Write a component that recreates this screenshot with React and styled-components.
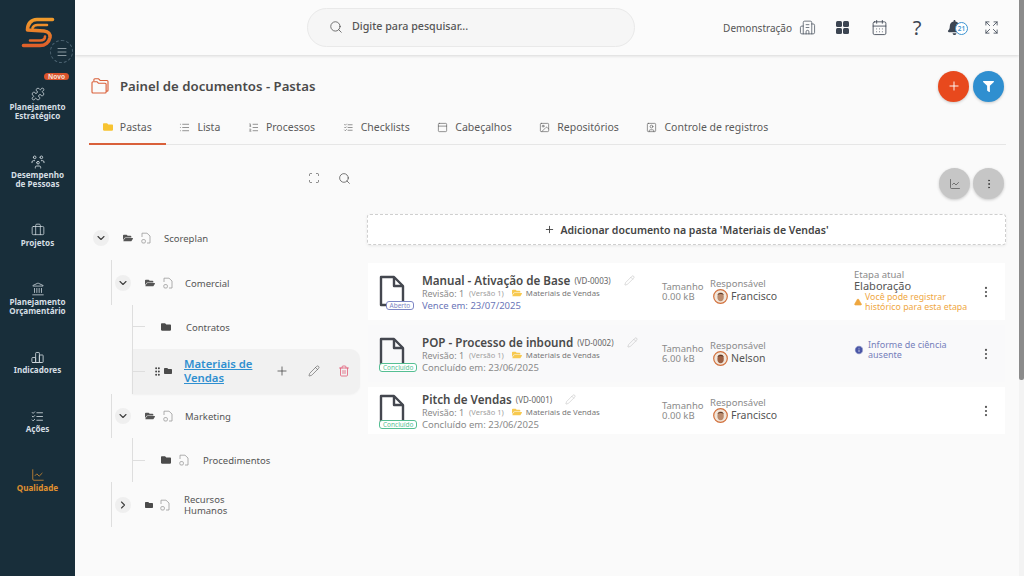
import React from "react";
import styled, { createGlobalStyle } from "styled-components";
import {
  Puzzle,
  Briefcase,
  Landmark,
  ChartLine,
  Menu,
  Search,
  Building2,
  CalendarDays,
  Expand,
  Plus,
  List,
  ListOrdered,
  PanelTop,
  Image,
  SquareUser,
  Scan,
  ChevronDown,
  ChevronRight,
  Pencil,
  Trash2,
  EllipsisVertical,
  GripVertical,
  Info,
  TriangleAlert,
} from "lucide-react";
import { FaBell, FaFolder, FaFolderOpen, FaFilter } from "react-icons/fa";
import { TbChartBar, TbUsersGroup, TbListCheck } from "react-icons/tb";

const GlobalStyle = createGlobalStyle`
  html, body { margin: 0; padding: 0; height: 100%; }
  body { font-family: "Noto Sans", "Liberation Sans", sans-serif; background: #fafafa; color: #4a4a4a; overflow: hidden; }
  * { box-sizing: border-box; }
`;

const navItems = [
  { icon: <Puzzle size={14} strokeWidth={1.3} />, label: "Planejamento Estratégico", isNew: true },
  { icon: <TbUsersGroup size={16} strokeWidth={1.3} />, label: "Desempenho de Pessoas" },
  { icon: <Briefcase size={14} strokeWidth={1.3} />, label: "Projetos" },
  { icon: <Landmark size={14} strokeWidth={1.3} />, label: "Planejamento Orçamentário" },
  { icon: <TbChartBar size={15} strokeWidth={1.3} />, label: "Indicadores" },
  { icon: <TbListCheck size={15} strokeWidth={1.3} />, label: "Ações" },
  { icon: <ChartLine size={14} strokeWidth={1.3} />, label: "Qualidade", active: true },
];

const tabs = [
  { icon: <FaFolder size={10} color="#f7c331" />, label: "Pastas", active: true },
  { icon: <List size={11} strokeWidth={1.4} />, label: "Lista" },
  { icon: <ListOrdered size={11} strokeWidth={1.4} />, label: "Processos" },
  { icon: <TbListCheck size={11} strokeWidth={1.4} />, label: "Checklists" },
  { icon: <PanelTop size={11} strokeWidth={1.4} />, label: "Cabeçalhos" },
  { icon: <Image size={11} strokeWidth={1.4} />, label: "Repositórios" },
  { icon: <SquareUser size={11} strokeWidth={1.4} />, label: "Controle de registros" },
];

const docs = [
  {
    title: "Manual - Ativação de Base",
    code: "(VD-0003)",
    status: "Aberto",
    due: "Vence em: 23/07/2025",
    size: "0.00 kB",
    owner: "Francisco",
    height: 57,
    stage: true,
  },
  {
    title: "POP - Processo de inbound",
    code: "(VD-0002)",
    status: "Concluído",
    due: "Concluído em: 23/06/2025",
    size: "6.00 kB",
    owner: "Nelson",
    height: 57,
    notice: true,
    tinted: true,
  },
  {
    title: "Pitch de Vendas",
    code: "(VD-0001)",
    status: "Concluído",
    due: "Concluído em: 23/06/2025",
    size: "0.00 kB",
    owner: "Francisco",
    height: 47,
  },
];

const Logo = () => (
  <svg width="36" height="34" viewBox="0 0 36 34" fill="none" strokeLinecap="round">
    <defs>
      <linearGradient id="lg" x1="0" y1="0" x2="0" y2="1">
        <stop offset="0" stopColor="#f09a2b" />
        <stop offset="1" stopColor="#e0602a" />
      </linearGradient>
    </defs>
    <path
      d="M31.5 3.5H16C10 3.5 6.5 8 6.5 14L23 15C27.5 15.5 29.5 18 29 21.5C28 26.5 24 29.5 19 29.5H2.5"
      stroke="url(#lg)"
      strokeWidth="3.6"
      strokeLinejoin="round"
    />
    <path d="M26 9H16.5C13.5 9 12 10.5 11.5 12" stroke="#ee8f2b" strokeWidth="2.6" />
    <path d="M9 24.5H19C22 24.5 24 23 24 20.5" stroke="#e56a2a" strokeWidth="2.6" />
  </svg>
);

const TitleFolder = () => (
  <svg width="18" height="16" viewBox="0 0 19 17" fill="none" stroke="#d9603a" strokeWidth="1.2" strokeLinejoin="round">
    <path d="M3 3.2V1.8C3 1.2 3.4 .8 4 .8H8L9.6 2.6H17C17.6 2.6 18 3 18 3.6V13C18 13.6 17.6 14 17 14H16" />
    <path d="M1 5C1 4.4 1.4 4 2 4H6.5L8 5.6H15C15.6 5.6 16 6 16 6.6V15C16 15.6 15.6 16 15 16H2C1.4 16 1 15.6 1 15V5Z" />
  </svg>
);

const FileMark = () => (
  <svg width="10" height="12" viewBox="0 0 10 12" fill="none" stroke="#9a9a9a" strokeWidth="0.8">
    <path d="M1 5V1.2H6L9 4V11H6" />
    <rect x="0.8" y="7.6" width="3.6" height="3.4" rx="1.2" />
  </svg>
);

const DocIcon = () => (
  <svg width="26" height="32" viewBox="0 0 26 32" fill="none" stroke="#44474f" strokeWidth="2.4" strokeLinejoin="round">
    <path d="M24 30H2V2H15L24 11V30Z" />
    <path d="M15 2V11H24" />
  </svg>
);

const Avatar = ({ dark }) => (
  <svg width="15" height="15" viewBox="0 0 15 15">
    <circle cx="7.5" cy="7.5" r="6.8" fill="#f1e6da" stroke="#d2703c" strokeWidth="1.2" />
    <ellipse cx="7.6" cy="7.8" rx="3.2" ry="4.4" fill={dark ? "#9c5f42" : "#b98a6c"} />
    <path d="M4.5 6C4.8 3.4 10.2 3.2 10.8 6C9 4.8 6.4 4.8 4.5 6Z" fill="#5b3a2a" />
  </svg>
);

const FolderName = ({ children }) => (
  <Crumb>
    <FaFolderOpen size={10} color="#f7c94f" />
    <CrumbText>{children}</CrumbText>
  </Crumb>
);

const DocCard = ({ doc }) => (
  <Card $height={doc.height} $tinted={doc.tinted}>
    <DocThumb>
      <DocIcon />
      <StatusBadge $done={doc.status !== "Aberto"}>{doc.status}</StatusBadge>
    </DocThumb>
    <DocInfo>
      <TitleLine>
        <DocTitle>{doc.title}</DocTitle>
        <DocCode>{doc.code}</DocCode>
        <Pencil size={11} strokeWidth={1} color="#b5b5b5" />
      </TitleLine>
      <MetaLine>
        <span>Revisão: 1</span>
        <Version>(Versão 1)</Version>
        <FolderName>Materiais de Vendas</FolderName>
      </MetaLine>
      <DueLine $open={doc.status === "Aberto"}>{doc.due}</DueLine>
    </DocInfo>
    <SizeCol>
      <SmallLabel>Tamanho</SmallLabel>
      <SmallLabel>{doc.size}</SmallLabel>
    </SizeCol>
    <OwnerCol>
      <SmallLabel>Responsável</SmallLabel>
      <OwnerRow>
        <Avatar dark={doc.owner === "Nelson"} />
        <OwnerName>{doc.owner}</OwnerName>
      </OwnerRow>
    </OwnerCol>
    <StageCol>
      {doc.stage && (
        <>
          <SmallLabel>Etapa atual</SmallLabel>
          <StageName>Elaboração</StageName>
          <Warning>
            <TriangleAlert size={8} fill="#efa73f" color="#efa73f" />
            <span>
              Você pode registrar
              <br />
              histórico para esta etapa
            </span>
          </Warning>
        </>
      )}
      {doc.notice && (
        <Notice>
          <Info size={10} fill="#4a56a6" color="#fff" strokeWidth={1.6} />
          <span>
            Informe de ciência
            <br />
            ausente
          </span>
        </Notice>
      )}
    </StageCol>
    <Kebab>
      <EllipsisVertical size={14} strokeWidth={1.8} color="#555" />
    </Kebab>
  </Card>
);

export default function App() {
  return (
    <Shell>
      <GlobalStyle />
      <Sidebar>
        <LogoBox>
          <Logo />
          <MenuToggle>
            <Menu size={12} strokeWidth={1.2} />
          </MenuToggle>
        </LogoBox>
        <Nav>
          {navItems.map((item) => (
            <NavItem key={item.label} $active={item.active}>
              {item.isNew && <NewBadge>Novo</NewBadge>}
              <NavIcon>{item.icon}</NavIcon>
              <NavLabel>{item.label}</NavLabel>
            </NavItem>
          ))}
        </Nav>
      </Sidebar>

      <Main>
        <TopBar>
          <SearchBox>
            <Search size={14} strokeWidth={1.3} />
            <SearchText>Digite para pesquisar...</SearchText>
          </SearchBox>
          <TopActions>
            <CompanyName>Demonstração</CompanyName>
            <TopIcon $w={30}>
              <Building2 size={17} strokeWidth={1} />
            </TopIcon>
            <TopIcon $w={40}>
              <Squares>
                <i />
                <i />
                <i />
                <i />
              </Squares>
            </TopIcon>
            <TopIcon $w={34}>
              <CalendarDays size={17} strokeWidth={1.2} />
            </TopIcon>
            <TopIcon $w={42}>
              <QuestionMark>?</QuestionMark>
            </TopIcon>
            <TopIcon $w={32}>
              <FaBell size={15} color="#3c4552" />
              <BellCount>21</BellCount>
            </TopIcon>
            <TopIcon $w={42}>
              <Expand size={15} strokeWidth={1.3} />
            </TopIcon>
          </TopActions>
        </TopBar>

        <Content>
          <PageHead>
            <PageTitle>
              <TitleFolder />
              <h1>Painel de documentos - Pastas</h1>
            </PageTitle>
            <RoundButtons>
              <RoundButton $bg="#e8491d">
                <Plus size={14} color="#fff" strokeWidth={1.6} />
              </RoundButton>
              <RoundButton $bg="#2f8fd0">
                <FaFilter size={11} color="#fff" />
              </RoundButton>
            </RoundButtons>
          </PageHead>

          <Tabs>
            {tabs.map((tab) => (
              <Tab key={tab.label} $active={tab.active}>
                {tab.icon}
                <span>{tab.label}</span>
              </Tab>
            ))}
          </Tabs>

          <Columns>
            <TreePanel>
              <TreeTools>
                <Scan size={12} strokeWidth={1.3} />
                <Search size={13} strokeWidth={1.3} />
              </TreeTools>

              <TreeRow>
                <Chevron>
                  <ChevronDown size={12} strokeWidth={2.2} />
                </Chevron>
                <FolderIcons $gap={8} $ml={14}>
                  <FaFolderOpen size={10} color="#555" />
                  <FileMark />
                </FolderIcons>
                <NodeLabel $ml={13}>Scoreplan</NodeLabel>
              </TreeRow>

              <TreeRow $pl={22}>
                <Guide />
                <Chevron $ml={3}>
                  <ChevronDown size={12} strokeWidth={2.2} />
                </Chevron>
                <FolderIcons $gap={8} $ml={14}>
                  <FaFolderOpen size={10} color="#555" />
                  <FileMark />
                </FolderIcons>
                <NodeLabel $ml={12}>Comercial</NodeLabel>
              </TreeRow>

              <TreeRow $pl={43}>
                <Guide />
                <Tick />
                <FolderIcons $ml={16}>
                  <FaFolder size={10} color="#4b4b4b" />
                </FolderIcons>
                <NodeLabel $ml={15}>Contratos</NodeLabel>
              </TreeRow>

              <SelectedRow>
                <Guide />
                <Tick />
                <GripVertical size={11} strokeWidth={2.2} color="#444" />
                <FaFolder size={8} color="#4b4b4b" />
                <SelectedLabel href="#">Materiais de Vendas</SelectedLabel>
                <RowActions>
                  <Plus size={14} strokeWidth={1.3} color="#444" />
                  <Pencil size={12} strokeWidth={1.2} color="#555" />
                  <Trash2 size={12} strokeWidth={1.5} color="#e0526f" />
                </RowActions>
              </SelectedRow>

              <TreeRow $pl={22}>
                <Guide />
                <Chevron $ml={3}>
                  <ChevronDown size={12} strokeWidth={2.2} />
                </Chevron>
                <FolderIcons $gap={8} $ml={14}>
                  <FaFolderOpen size={10} color="#555" />
                  <FileMark />
                </FolderIcons>
                <NodeLabel $ml={12}>Marketing</NodeLabel>
              </TreeRow>

              <TreeRow $pl={43}>
                <Guide />
                <Tick />
                <FolderIcons $gap={8} $ml={16}>
                  <FaFolder size={10} color="#4b4b4b" />
                  <FileMark />
                </FolderIcons>
                <NodeLabel $ml={14}>Procedimentos</NodeLabel>
              </TreeRow>

              <TreeRow $pl={22}>
                <Guide />
                <Chevron $ml={3}>
                  <ChevronRight size={12} strokeWidth={2.2} />
                </Chevron>
                <FolderIcons $gap={7} $ml={14}>
                  <FaFolder size={8} color="#4b4b4b" />
                  <FileMark />
                </FolderIcons>
                <NodeLabel $ml={14} $w={60}>
                  Recursos Humanos
                </NodeLabel>
              </TreeRow>
            </TreePanel>

            <DocsPanel>
              <DocsTools>
                <GreyButton>
                  <ChartLine size={12} strokeWidth={1.3} />
                </GreyButton>
                <GreyButton>
                  <EllipsisVertical size={12} strokeWidth={2} />
                </GreyButton>
              </DocsTools>
              <AddDoc>
                <Plus size={11} strokeWidth={2} />
                Adicionar documento na pasta 'Materiais de Vendas'
              </AddDoc>
              <DocList>
                {docs.map((doc) => (
                  <DocCard key={doc.code} doc={doc} />
                ))}
              </DocList>
            </DocsPanel>
          </Columns>
        </Content>
      </Main>

      <Scrollbar>
        <ScrollThumb />
      </Scrollbar>
    </Shell>
  );
}

const Shell = styled.div`
  display: flex;
  width: 100vw;
  height: 100vh;
  overflow: hidden;
`;

const Sidebar = styled.aside`
  width: 75px;
  flex: none;
  background: #182e3a;
  color: #d5dee3;
`;

const LogoBox = styled.div`
  position: relative;
  height: 77px;
  padding: 16px 0 0 21px;
`;

const MenuToggle = styled.div`
  position: absolute;
  left: 50px;
  top: 40px;
  width: 23px;
  height: 23px;
  border-radius: 50%;
  border: 1px dashed #4b6270;
  display: flex;
  align-items: center;
  justify-content: center;
`;

const Nav = styled.nav`
  display: flex;
  flex-direction: column;
  align-items: center;
`;

const NavItem = styled.div`
  position: relative;
  width: 100%;
  padding-top: 9px;
  padding-bottom: 25px;
  display: flex;
  flex-direction: column;
  align-items: center;
  color: ${(p) => (p.$active ? "#e0912f" : "#d5dee3")};
`;

const NewBadge = styled.span`
  position: absolute;
  top: -4px;
  right: 6px;
  background: #d9532c;
  color: #f7e0d6;
  font-size: 6.5px;
  font-weight: 700;
  line-height: 7px;
  padding: 0 4px;
  border-radius: 4px;
`;

const NavIcon = styled.div`
  height: 16px;
  display: flex;
  align-items: center;
  justify-content: center;
`;

const NavLabel = styled.div`
  font-size: 8.1px;
  line-height: 9px;
  font-weight: 700;
  text-align: center;
  width: 62px;
`;

const Main = styled.main`
  flex: 1;
  min-width: 0;
  display: flex;
  flex-direction: column;
`;

const TopBar = styled.header`
  height: 55px;
  flex: none;
  display: flex;
  align-items: center;
  justify-content: space-between;
  padding-left: 232px;
  background: #fbfbfb;
  box-shadow: 0 1px 3px rgba(0, 0, 0, 0.14);
`;

const SearchBox = styled.div`
  width: 328px;
  height: 39px;
  margin-top: -1px;
  padding-left: 21px;
  display: flex;
  align-items: center;
  gap: 9px;
  background: #f6f6f6;
  border: 1px solid #e9e9e9;
  border-radius: 20px;
`;

const SearchText = styled.span`
  font-size: 10.7px;
  font-weight: 500;
  color: #555;
  margin-top: -2px;
`;

const TopActions = styled.div`
  display: flex;
  align-items: center;
  color: #3c4552;
  padding-right: 7px;
`;

const CompanyName = styled.span`
  font-size: 10px;
  color: #555;
`;

const TopIcon = styled.div`
  position: relative;
  width: ${(p) => p.$w}px;
  display: flex;
  align-items: center;
  justify-content: center;
`;

const Squares = styled.div`
  display: grid;
  grid-template-columns: 6px 6px;
  gap: 1px;
  i {
    height: 6px;
    border-radius: 1.5px;
    background: #3c4552;
  }
`;

const QuestionMark = styled.span`
  font-size: 20px;
  line-height: 20px;
  color: #3c4552;
`;

const BellCount = styled.span`
  position: absolute;
  left: 17px;
  top: 2px;
  width: 13px;
  height: 13px;
  border-radius: 50%;
  border: 1px solid #3b93d1;
  background: #fff;
  color: #3b93d1;
  font-size: 6.5px;
  font-weight: 600;
  display: flex;
  align-items: center;
  justify-content: center;
`;

const Content = styled.div`
  flex: 1;
  padding: 0 13px 0 14px;
`;

const PageHead = styled.div`
  height: 62px;
  display: flex;
  align-items: center;
  justify-content: space-between;
`;

const PageTitle = styled.div`
  display: flex;
  align-items: center;
  gap: 11px;
  padding-left: 2px;
  margin-top: -1px;
  h1 {
    margin: 0;
    font-size: 13.2px;
    font-weight: 600;
    color: #4a4a4a;
  }
`;

const RoundButtons = styled.div`
  display: flex;
  gap: 4px;
  margin-right: 2px;
`;

const RoundButton = styled.div`
  width: 31px;
  height: 31px;
  border-radius: 50%;
  background: ${(p) => p.$bg};
  display: flex;
  align-items: center;
  justify-content: center;
  box-shadow: 0 1px 3px rgba(0, 0, 0, 0.2);
`;

const Tabs = styled.div`
  height: 28px;
  display: flex;
  border-bottom: 1px solid #e6e6e6;
`;

const Tab = styled.div`
  height: 28px;
  display: flex;
  align-items: center;
  gap: 7px;
  padding: 0 13.8px 6px;
  font-size: 10.5px;
  color: #5a5a5a;
  border-bottom: 2px solid ${(p) => (p.$active ? "#d9603a" : "transparent")};
`;

const Columns = styled.div`
  display: grid;
  grid-template-columns: 278px 639px;
`;

const TreePanel = styled.section`
  width: 271px;
`;

const TreeTools = styled.div`
  height: 71px;
  padding: 27px 9px 0 0;
  display: flex;
  justify-content: flex-end;
  gap: 18px;
  color: #444;
`;

const TreeRow = styled.div`
  height: 44.4px;
  display: flex;
  align-items: center;
  padding-left: ${(p) => p.$pl || 0}px;
  position: relative;
`;

const SelectedRow = styled(TreeRow)`
  margin-left: 43px;
  padding-right: 10px;
  background: #f1f1f1;
  border-radius: 0 10px 10px 0;
  box-shadow: 0 1px 2px rgba(0, 0, 0, 0.04);
  svg:nth-of-type(1) {
    margin-left: 7px;
  }
  svg:nth-of-type(2) {
    margin-left: 1px;
  }
`;

const Guide = styled.span`
  align-self: stretch;
  width: 1px;
  background: #dedede;
  flex: none;
`;

const Tick = styled.span`
  width: 12px;
  height: 1px;
  background: #dedede;
  flex: none;
`;

const Chevron = styled.span`
  width: 16px;
  height: 16px;
  border-radius: 50%;
  margin-left: ${(p) => p.$ml ?? 4}px;
  background: #efefef;
  color: #3e3e3e;
  display: flex;
  align-items: center;
  justify-content: center;
  flex: none;
`;

const FolderIcons = styled.span`
  display: flex;
  align-items: center;
  gap: ${(p) => p.$gap || 0}px;
  margin-left: ${(p) => p.$ml || 0}px;
  flex: none;
`;

const NodeLabel = styled.span`
  margin-left: ${(p) => p.$ml || 0}px;
  margin-top: 1px;
  font-size: 9.5px;
  line-height: 11px;
  color: #555;
  ${(p) => p.$w && `width: ${p.$w}px;`}
`;

const SelectedLabel = styled.a`
  margin-left: 12px;
  width: 84px;
  font-size: 11.3px;
  line-height: 14px;
  font-weight: 600;
  color: #2f8fd0;
  text-decoration: underline;
`;

const RowActions = styled.div`
  margin-left: auto;
  display: flex;
  align-items: center;
  gap: 18px;
`;

const DocsPanel = styled.section`
  min-width: 0;
`;

const DocsTools = styled.div`
  height: 69px;
  padding: 23px 2px 0 0;
  display: flex;
  justify-content: flex-end;
  gap: 3px;
`;

const GreyButton = styled.div`
  width: 31px;
  height: 31px;
  border-radius: 50%;
  background: #c6c6c6;
  color: #444;
  display: flex;
  align-items: center;
  justify-content: center;
  box-shadow: 0 1px 3px rgba(0, 0, 0, 0.2);
`;

const AddDoc = styled.div`
  height: 31px;
  display: flex;
  align-items: center;
  justify-content: center;
  gap: 5px;
  background: #fff;
  border: 1px dashed #cfcfcf;
  border-radius: 3px;
  box-shadow: 0 1px 3px rgba(0, 0, 0, 0.08);
  font-size: 10.5px;
  font-weight: 600;
  color: #444;
`;

const DocList = styled.div`
  margin-top: 18px;
  padding: 0 1px;
  display: flex;
  flex-direction: column;
  gap: 5px;
`;

const Card = styled.article`
  height: ${(p) => p.$height}px;
  display: grid;
  grid-template-columns: 54px 240px 48px 144px 1fr 30px;
  align-items: center;
  background: ${(p) => (p.$tinted ? "#f9f9fa" : "#fff")};
`;

const DocThumb = styled.div`
  position: relative;
  padding-left: 11px;
  height: 34px;
`;

const StatusBadge = styled.span`
  position: absolute;
  left: ${(p) => (p.$done ? 11 : 18)}px;
  bottom: -1px;
  height: 9px;
  padding: 0 ${(p) => (p.$done ? 3 : 2.5)}px;
  font-size: 6.5px;
  line-height: 7.5px;
  background: #fff;
  border-radius: 3px;
  border: 1px solid ${(p) => (p.$done ? "#55bf93" : "#7d86c4")};
  color: ${(p) => (p.$done ? "#55bf93" : "#7d86c4")};
`;

const DocInfo = styled.div`
  display: flex;
  flex-direction: column;
  min-width: 0;
`;

const TitleLine = styled.div`
  display: flex;
  align-items: center;
  gap: 4px;
  height: 15px;
  svg {
    margin-left: 9px;
  }
`;

const DocTitle = styled.span`
  font-size: 11.65px;
  font-weight: 600;
  color: #4a4a4a;
  white-space: nowrap;
`;

const DocCode = styled.span`
  font-size: 8px;
  color: #666;
`;

const MetaLine = styled.div`
  display: flex;
  align-items: center;
  height: 11px;
  font-size: 9px;
  color: #8a8a8a;
  white-space: nowrap;
`;

const Version = styled.span`
  font-size: 7.5px;
  color: #a0a0a0;
  margin-left: 5px;
`;

const Crumb = styled.span`
  display: inline-flex;
  align-items: center;
  gap: 4px;
  margin-left: 8px;
`;

const CrumbText = styled.span`
  font-size: 7.8px;
  color: #777;
`;

const DueLine = styled.div`
  font-size: 9.5px;
  line-height: 11px;
  margin-top: 1px;
  color: ${(p) => (p.$open ? "#6a76b8" : "#8a8a8a")};
`;

const SizeCol = styled.div`
  display: flex;
  flex-direction: column;
  margin-top: 1px;
`;

const SmallLabel = styled.span`
  font-size: 9.5px;
  line-height: 10.5px;
  color: #8a8a8a;
`;

const OwnerCol = styled.div`
  display: flex;
  flex-direction: column;
`;

const OwnerRow = styled.div`
  display: flex;
  align-items: center;
  gap: 3px;
  padding-left: 3px;
  margin-top: -1px;
`;

const OwnerName = styled.span`
  font-size: 10.5px;
  color: #555;
`;

const StageCol = styled.div`
  display: flex;
  flex-direction: column;
  margin-top: -1px;
`;

const StageName = styled.span`
  font-size: 11px;
  line-height: 12px;
  color: #555;
`;

const Warning = styled.div`
  display: flex;
  align-items: center;
  gap: 3px;
  font-size: 8.8px;
  line-height: 10px;
  color: #efa73f;
  white-space: nowrap;
`;

const Notice = styled.div`
  display: flex;
  align-items: center;
  gap: 4px;
  font-size: 9px;
  line-height: 10px;
  color: #7680bb;
  margin-top: -6px;
`;

const Kebab = styled.div`
  display: flex;
  justify-content: center;
  padding-right: 8px;
`;

const Scrollbar = styled.div`
  width: 5px;
  flex: none;
  background: #f3f3f3;
`;

const ScrollThumb = styled.div`
  height: 380px;
  background: #8b8b8b;
  border-radius: 0 0 2px 2px;
`;
